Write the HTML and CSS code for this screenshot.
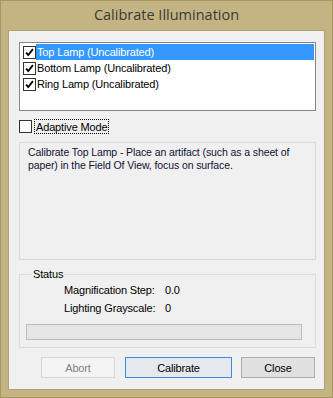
FILE: index.html
```html
<!DOCTYPE html>
<html lang="en">
<head>
  <meta charset="UTF-8">
  <title>Calibrate Illumination</title>
  <link rel="stylesheet" href="styles.css">
</head>
<body>

<div class="window">
  <div class="title">Calibrate Illumination</div>

  <div class="client">
    <ul class="lamp-list">
      <li class="selected">
        <span class="check checked"><svg viewBox="0 0 13 13"><path d="M2.5 6.5 L5 9.5 L10.5 2.5" /></svg></span>
        <span class="item-text">Top Lamp (Uncalibrated)</span>
      </li>
      <li>
        <span class="check checked"><svg viewBox="0 0 13 13"><path d="M2.5 6.5 L5 9.5 L10.5 2.5" /></svg></span>
        <span class="item-text">Bottom Lamp (Uncalibrated)</span>
      </li>
      <li>
        <span class="check checked"><svg viewBox="0 0 13 13"><path d="M2.5 6.5 L5 9.5 L10.5 2.5" /></svg></span>
        <span class="item-text">Ring Lamp (Uncalibrated)</span>
      </li>
    </ul>

    <div class="adaptive">
      <span class="check"></span>
      <span class="focus-text">Adaptive Mode</span>
    </div>

    <div class="info-box">
      Calibrate Top Lamp - Place an artifact (such as a sheet of paper) in the Field Of View, focus on surface.
    </div>

    <fieldset class="status">
      <legend>Status</legend>
      <div class="status-row">
        <span class="status-label">Magnification Step:</span>
        <span class="status-value">0.0</span>
      </div>
      <div class="status-row">
        <span class="status-label">Lighting Grayscale:</span>
        <span class="status-value">0</span>
      </div>
      <div class="progress"></div>
    </fieldset>

    <div class="buttons">
      <button class="btn btn-abort" disabled>Abort</button>
      <button class="btn btn-calibrate">Calibrate</button>
      <button class="btn btn-close">Close</button>
    </div>
  </div>
</div>

</body>
</html>
```

FILE: styles.css
```css
/* General Reset */
* {
  margin: 0;
  padding: 0;
  box-sizing: border-box;
}

body {
  font-family: 'Liberation Sans', Arial, sans-serif;
  font-size: 11px;
  letter-spacing: -0.15px;
  color: #000;
  background-color: #c4b483;
}

.window {
  width: 333px;
  height: 398px;
  border: 1px solid #a8965f;
  background-color: #c4b483;
  padding: 0 7px 7px 7px;
}

.title {
  height: 29px;
  line-height: 28px;
  text-align: center;
  font-family: 'Open Sans', sans-serif;
  font-size: 14.5px;
  letter-spacing: 0;
  color: #3a3a3a;
}

.client {
  height: 360px;
  background-color: #f0f0f0;
  border: 1px solid #b3a270;
  padding: 11px 8px 0 10px;
}

/* Lamp list */
.lamp-list {
  list-style: none;
  height: 69px;
  background-color: #fff;
  border: 1px solid #828790;
  padding: 1px 1px 0 1px;
}

.lamp-list li {
  display: flex;
  align-items: center;
  height: 16px;
}

.item-text {
  flex: 1;
  height: 16px;
  line-height: 16px;
  padding-left: 1px;
}

.lamp-list li.selected .item-text {
  background-color: #3399ff;
  color: #fff;
}

.check {
  display: inline-block;
  width: 13px;
  height: 13px;
  margin-left: 2px;
  border: 1px solid #333;
  background-color: #fff;
}

.check svg {
  display: block;
  width: 11px;
  height: 11px;
}

.check svg path {
  fill: none;
  stroke: #000;
  stroke-width: 2.2;
}

/* Adaptive mode */
.adaptive {
  display: flex;
  align-items: center;
  margin-top: 8px;
  height: 15px;
}

.adaptive .check {
  margin-left: 0;
}

.focus-text {
  margin-left: 2px;
  padding: 0 1px;
  height: 15px;
  line-height: 14px;
  border: 1px dotted #000;
}

/* Info text */
.info-box {
  margin-top: 8px;
  height: 118px;
  border: 1px solid #dadada;
  padding: 3px 2px 5px 8px;
  font-size: 10.5px;
  letter-spacing: -0.1px;
  line-height: 13px;
  color: #111133;
}

/* Status group */
.status {
  margin-top: 8px;
  height: 80px;
  border: 1px solid #dcdcdc;
  padding: 0 13px 0 6px;
}

.status legend {
  margin-left: 6px;
  padding: 0 1px;
  line-height: 12px;
}

.status-row {
  display: flex;
  height: 18px;
  line-height: 18px;
  padding-left: 38px;
}

.status-row:first-of-type {
  margin-top: 1px;
}

.status-label {
  width: 101px;
}

.progress {
  margin-top: 7px;
  height: 16px;
  border: 1px solid #bcbcbc;
  background-color: #e6e6e6;
}

/* Buttons */
.buttons {
  display: flex;
  justify-content: flex-end;
  gap: 9px;
  margin-top: 9px;
  padding-right: 1px;
}

.btn {
  height: 21px;
  font-family: 'Liberation Sans', Arial, sans-serif;
  font-size: 11px;
  letter-spacing: -0.15px;
  color: #000;
  background-color: #e1e1e1;
  border: 1px solid #adadad;
}

.btn-abort {
  width: 74px;
  margin-right: 1px;
  color: #838383;
  background-color: #f4f4f4;
  border-color: #d6d6d6;
}

.btn-calibrate {
  width: 107px;
  border-color: #3c8ce6;
  background-color: #e5e8ec;
}

.btn-close {
  width: 74px;
}
```
